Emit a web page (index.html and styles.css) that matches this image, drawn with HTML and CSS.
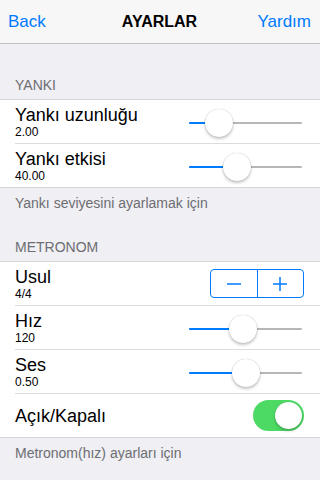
FILE: index.html
```html
<!DOCTYPE html>
<html lang="tr">
<head>
    <meta charset="UTF-8">
    <meta name="viewport" content="width=device-width, initial-scale=1.0">
    <title>Ayarlar</title>
    <link rel="stylesheet" href="styles.css">
</head>
<body>

    <div class="navbar">
        <span class="nav-btn">Back</span>
        <span class="nav-title">AYARLAR</span>
        <span class="nav-btn right">Yardım</span>
    </div>

    <div class="section-header first">YANKI</div>
    <div class="group">
        <div class="row">
            <div class="label">
                <div class="title">Yankı uzunluğu</div>
                <div class="value">2.00</div>
            </div>
            <div class="slider" style="--v: 0.19">
                <div class="fill"></div>
                <div class="thumb"></div>
            </div>
        </div>
        <div class="row">
            <div class="label">
                <div class="title">Yankı etkisi</div>
                <div class="value">40.00</div>
            </div>
            <div class="slider" style="--v: 0.4">
                <div class="fill"></div>
                <div class="thumb"></div>
            </div>
        </div>
    </div>
    <div class="section-footer">Yankı seviyesini ayarlamak için</div>

    <div class="section-header">METRONOM</div>
    <div class="group">
        <div class="row">
            <div class="label">
                <div class="title">Usul</div>
                <div class="value">4/4</div>
            </div>
            <div class="stepper">
                <div class="step">
                    <svg width="16" height="16" viewBox="0 0 16 16"><path d="M1 8h14" stroke="#007aff" stroke-width="1.5"/></svg>
                </div>
                <div class="step">
                    <svg width="16" height="16" viewBox="0 0 16 16"><path d="M1 8h14M8 1v14" stroke="#007aff" stroke-width="1.5"/></svg>
                </div>
            </div>
        </div>
        <div class="row">
            <div class="label">
                <div class="title">Hız</div>
                <div class="value">120</div>
            </div>
            <div class="slider" style="--v: 0.47">
                <div class="fill"></div>
                <div class="thumb"></div>
            </div>
        </div>
        <div class="row">
            <div class="label">
                <div class="title">Ses</div>
                <div class="value">0.50</div>
            </div>
            <div class="slider" style="--v: 0.5">
                <div class="fill"></div>
                <div class="thumb"></div>
            </div>
        </div>
        <div class="row single">
            <div class="title">Açık/Kapalı</div>
            <div class="switch on">
                <div class="knob"></div>
            </div>
        </div>
    </div>
    <div class="section-footer">Metronom(hız) ayarları için</div>

</body>
</html>
```

FILE: styles.css
```css
body {
    margin: 0;
    font-family: 'Liberation Sans', Arial, sans-serif;
    background-color: #efeff4;
    color: #000;
    width: 320px;
    height: 480px;
    overflow: hidden;
}
.navbar {
    height: 43px;
    background: #f7f7f8;
    border-bottom: 1px solid #bfbfc2;
    display: grid;
    grid-template-columns: 1fr auto 1fr;
    align-items: center;
    padding: 0 9px 0 8px;
}
.nav-btn {
    color: #007aff;
    font-size: 17px;
}
.nav-btn.right {
    text-align: right;
}
.nav-title {
    font-size: 16px;
    font-weight: bold;
}
.section-header {
    font-size: 14px;
    line-height: 16px;
    color: #6d6d72;
    padding: 28px 15px 6px;
}
.section-header.first {
    padding-top: 33px;
}
.section-footer {
    font-size: 14px;
    line-height: 16px;
    color: #6d6d72;
    padding: 7px 15px 0;
}
.group {
    background: white;
    border-top: 1px solid #d6d6da;
    border-bottom: 1px solid #d6d6da;
}
.row {
    height: 43px;
    margin-left: 15px;
    padding-right: 16px;
    border-bottom: 1px solid #dcdcdf;
    display: flex;
    align-items: center;
    justify-content: space-between;
}
.row:last-child {
    border-bottom: none;
}
.label {
    padding-top: 1px;
}
.title {
    font-size: 18px;
    line-height: 20px;
}
.value {
    font-size: 12px;
    line-height: 14px;
}
.slider {
    position: relative;
    width: 113px;
    height: 28px;
    margin-right: 2px;
    margin-top: 2px;
}
.slider::before {
    content: "";
    position: absolute;
    left: 0;
    right: 0;
    top: 13px;
    height: 2px;
    background: #b7b7b7;
    border-radius: 1px;
}
.fill {
    position: absolute;
    left: 0;
    top: 13px;
    height: 2px;
    width: calc(14px + var(--v) * 85px);
    background: #007aff;
    border-radius: 1px;
}
.thumb {
    position: absolute;
    top: 0;
    left: calc(var(--v) * 85px);
    width: 28px;
    height: 28px;
    border-radius: 50%;
    background: white;
    box-shadow: 0 2px 3px rgba(0,0,0,0.22), 0 0 1px rgba(0,0,0,0.3);
}
.stepper {
    display: flex;
    width: 92px;
    height: 27px;
    border: 1px solid #007aff;
    border-radius: 4px;
}
.step {
    flex: 1;
    display: flex;
    align-items: center;
    justify-content: center;
}
.step + .step {
    border-left: 1px solid #007aff;
}
.switch {
    width: 51px;
    height: 31px;
    border-radius: 16px;
    background: #e5e5ea;
    position: relative;
}
.switch.on {
    background: #4cd964;
}
.knob {
    position: absolute;
    top: 2px;
    left: 2px;
    width: 27px;
    height: 27px;
    border-radius: 50%;
    background: white;
    box-shadow: 0 2px 3px rgba(0,0,0,0.2), 0 0 1px rgba(0,0,0,0.2);
}
.switch.on .knob {
    left: 22px;
}
```
